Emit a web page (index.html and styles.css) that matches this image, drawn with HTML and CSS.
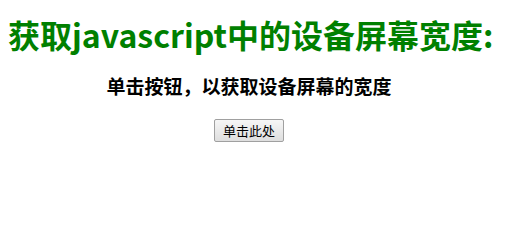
FILE: index.html
```html
<!DOCTYPE html>
<html lang="zh">
<head>
<meta charset="utf-8">
<title>获取javascript中的设备屏幕宽度</title>
<link rel="stylesheet" href="styles.css">
</head>
<body>
<h1 class="title">获取javascript中的设备屏幕宽度:</h1>
<h2 class="subtitle">单击按钮，以获取设备屏幕的宽度</h2>
<button class="btn" type="button">单击此处</button>
</body>
</html>
```
FILE: styles.css
```css
body {
  margin: 8px;
  padding-right: 8px;
  text-align: center;
  font-family: "Noto Sans CJK SC", "Open Sans", sans-serif;
  background: #fff;
}
.title {
  color: #008000;
  font-size: 32px;
  font-weight: bold;
  margin: 6px 0 0;
  line-height: 40px;
  white-space: nowrap;
}
.subtitle {
  color: #000;
  font-size: 19px;
  font-weight: bold;
  margin: 20px 0 0;
  line-height: 24px;
}
.btn {
  margin-top: 21px;
  font-family: "Noto Sans CJK SC", sans-serif;
  font-size: 13px;
  padding: 1px 8px;
  height: 23px;
  border: 1px solid #a0a0a0;
  border-radius: 2px;
  background: linear-gradient(#f6f6f6, #dedede);
  color: #000;
}
```
